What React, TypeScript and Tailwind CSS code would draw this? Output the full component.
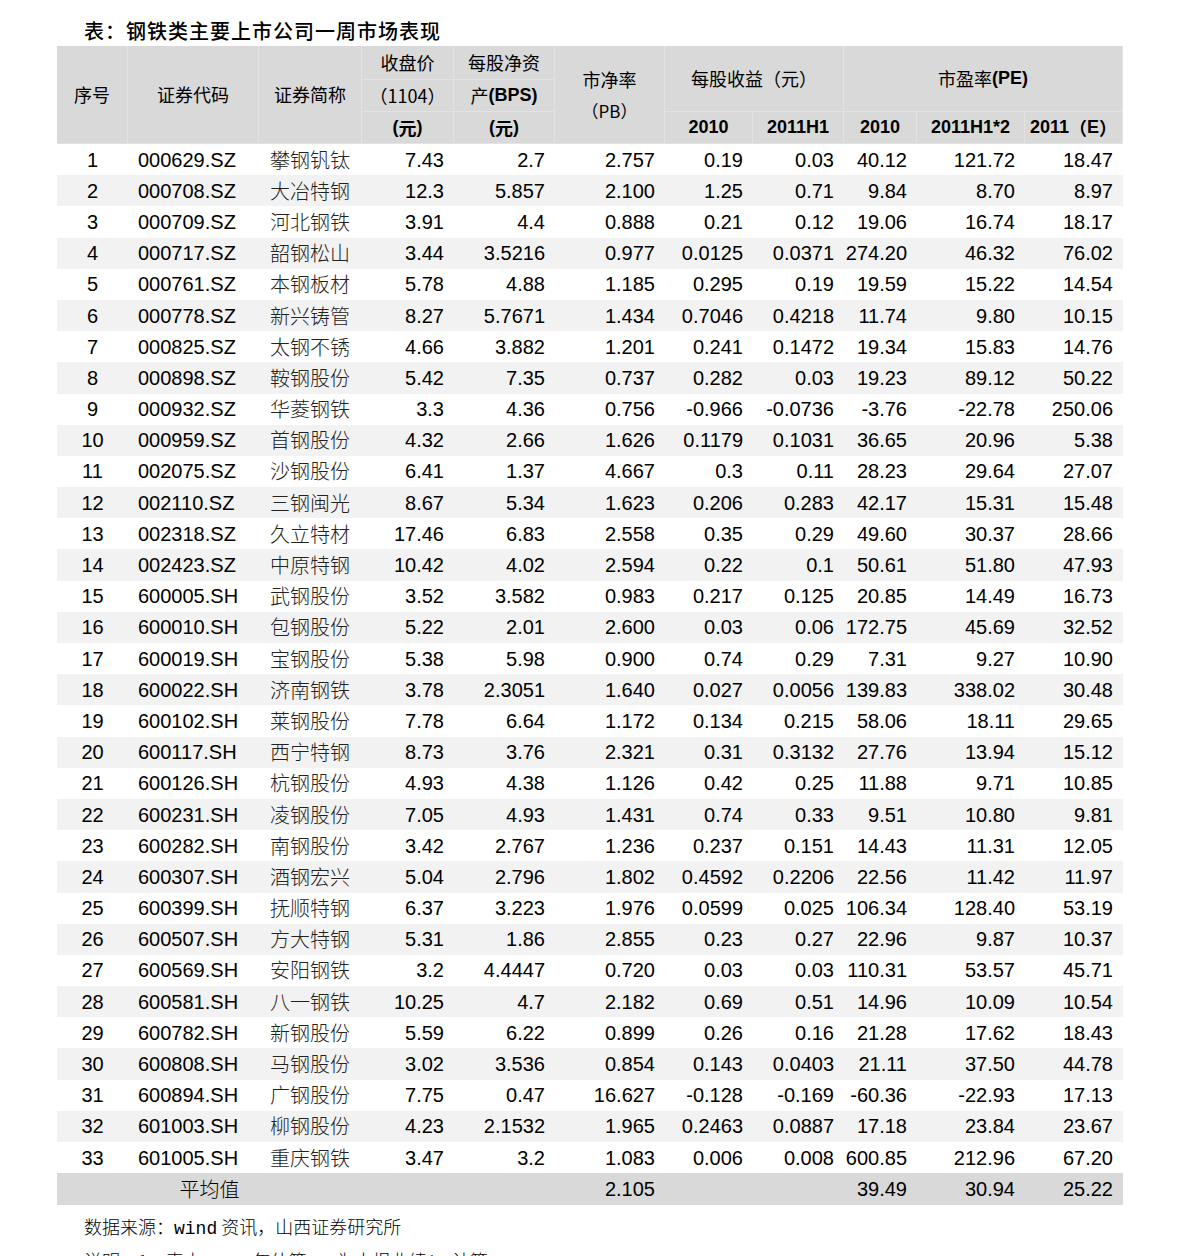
import React from "react";

const rows: string[][] = [
  ["1", "000629.SZ", "攀钢钒钛", "7.43", "2.7", "2.757", "0.19", "0.03", "40.12", "121.72", "18.47"],
  ["2", "000708.SZ", "大冶特钢", "12.3", "5.857", "2.100", "1.25", "0.71", "9.84", "8.70", "8.97"],
  ["3", "000709.SZ", "河北钢铁", "3.91", "4.4", "0.888", "0.21", "0.12", "19.06", "16.74", "18.17"],
  ["4", "000717.SZ", "韶钢松山", "3.44", "3.5216", "0.977", "0.0125", "0.0371", "274.20", "46.32", "76.02"],
  ["5", "000761.SZ", "本钢板材", "5.78", "4.88", "1.185", "0.295", "0.19", "19.59", "15.22", "14.54"],
  ["6", "000778.SZ", "新兴铸管", "8.27", "5.7671", "1.434", "0.7046", "0.4218", "11.74", "9.80", "10.15"],
  ["7", "000825.SZ", "太钢不锈", "4.66", "3.882", "1.201", "0.241", "0.1472", "19.34", "15.83", "14.76"],
  ["8", "000898.SZ", "鞍钢股份", "5.42", "7.35", "0.737", "0.282", "0.03", "19.23", "89.12", "50.22"],
  ["9", "000932.SZ", "华菱钢铁", "3.3", "4.36", "0.756", "-0.966", "-0.0736", "-3.76", "-22.78", "250.06"],
  ["10", "000959.SZ", "首钢股份", "4.32", "2.66", "1.626", "0.1179", "0.1031", "36.65", "20.96", "5.38"],
  ["11", "002075.SZ", "沙钢股份", "6.41", "1.37", "4.667", "0.3", "0.11", "28.23", "29.64", "27.07"],
  ["12", "002110.SZ", "三钢闽光", "8.67", "5.34", "1.623", "0.206", "0.283", "42.17", "15.31", "15.48"],
  ["13", "002318.SZ", "久立特材", "17.46", "6.83", "2.558", "0.35", "0.29", "49.60", "30.37", "28.66"],
  ["14", "002423.SZ", "中原特钢", "10.42", "4.02", "2.594", "0.22", "0.1", "50.61", "51.80", "47.93"],
  ["15", "600005.SH", "武钢股份", "3.52", "3.582", "0.983", "0.217", "0.125", "20.85", "14.49", "16.73"],
  ["16", "600010.SH", "包钢股份", "5.22", "2.01", "2.600", "0.03", "0.06", "172.75", "45.69", "32.52"],
  ["17", "600019.SH", "宝钢股份", "5.38", "5.98", "0.900", "0.74", "0.29", "7.31", "9.27", "10.90"],
  ["18", "600022.SH", "济南钢铁", "3.78", "2.3051", "1.640", "0.027", "0.0056", "139.83", "338.02", "30.48"],
  ["19", "600102.SH", "莱钢股份", "7.78", "6.64", "1.172", "0.134", "0.215", "58.06", "18.11", "29.65"],
  ["20", "600117.SH", "西宁特钢", "8.73", "3.76", "2.321", "0.31", "0.3132", "27.76", "13.94", "15.12"],
  ["21", "600126.SH", "杭钢股份", "4.93", "4.38", "1.126", "0.42", "0.25", "11.88", "9.71", "10.85"],
  ["22", "600231.SH", "凌钢股份", "7.05", "4.93", "1.431", "0.74", "0.33", "9.51", "10.80", "9.81"],
  ["23", "600282.SH", "南钢股份", "3.42", "2.767", "1.236", "0.237", "0.151", "14.43", "11.31", "12.05"],
  ["24", "600307.SH", "酒钢宏兴", "5.04", "2.796", "1.802", "0.4592", "0.2206", "22.56", "11.42", "11.97"],
  ["25", "600399.SH", "抚顺特钢", "6.37", "3.223", "1.976", "0.0599", "0.025", "106.34", "128.40", "53.19"],
  ["26", "600507.SH", "方大特钢", "5.31", "1.86", "2.855", "0.23", "0.27", "22.96", "9.87", "10.37"],
  ["27", "600569.SH", "安阳钢铁", "3.2", "4.4447", "0.720", "0.03", "0.03", "110.31", "53.57", "45.71"],
  ["28", "600581.SH", "八一钢铁", "10.25", "4.7", "2.182", "0.69", "0.51", "14.96", "10.09", "10.54"],
  ["29", "600782.SH", "新钢股份", "5.59", "6.22", "0.899", "0.26", "0.16", "21.28", "17.62", "18.43"],
  ["30", "600808.SH", "马钢股份", "3.02", "3.536", "0.854", "0.143", "0.0403", "21.11", "37.50", "44.78"],
  ["31", "600894.SH", "广钢股份", "7.75", "0.47", "16.627", "-0.128", "-0.169", "-60.36", "-22.93", "17.13"],
  ["32", "601003.SH", "柳钢股份", "4.23", "2.1532", "1.965", "0.2463", "0.0887", "17.18", "23.84", "23.67"],
  ["33", "601005.SH", "重庆钢铁", "3.47", "3.2", "1.083", "0.006", "0.008", "600.85", "212.96", "67.20"],
];

const COLS = "grid-cols-[71px_131px_103px_92px_101px_110px_88px_91px_73px_108px_98px]";
const num = "font-['Liberation_Sans',Arial,sans-serif]";
const cjk = "font-['Noto_Sans_CJK_SC',sans-serif]";
const hcell = "flex items-center justify-center border-r border-b border-[#e3e3e3]";

export default function App() {
  return (
    <div className="w-[1191px] bg-white text-black">
      <div className="pl-[57px] pt-[16px]">
        <div className={`h-[30px] pl-[27px] text-[20px] leading-[30px] font-medium tracking-[1px] ${cjk}`}>
          表：钢铁类主要上市公司一周市场表现
        </div>
        <div className="w-[1066px]">
          {/* header */}
          <div className={`grid ${COLS} grid-rows-[34px_32px_32px] bg-[#d9d9d9] text-[18px] ${cjk}`}>
            <div className={`${hcell} col-start-1 row-start-1 row-span-3`}>序号</div>
            <div className={`${hcell} col-start-2 row-start-1 row-span-3`}>证券代码</div>
            <div className={`${hcell} col-start-3 row-start-1 row-span-3`}>证券简称</div>
            <div className={`${hcell} col-start-4 row-start-1`}>收盘价</div>
            <div className={`${hcell} col-start-4 row-start-2`}>（1104）</div>
            <div className={`${hcell} col-start-4 row-start-3 font-bold`}>
              <span className={num}>(</span>元<span className={num}>)</span>
            </div>
            <div className={`${hcell} col-start-5 row-start-1`}>每股净资</div>
            <div className={`${hcell} col-start-5 row-start-2`}>
              产<span className={`${num} font-bold`}>(BPS)</span>
            </div>
            <div className={`${hcell} col-start-5 row-start-3 font-bold`}>
              <span className={num}>(</span>元<span className={num}>)</span>
            </div>
            <div className={`${hcell} col-start-6 row-start-1 row-span-3 flex-col leading-[32px]`}>
              <div>市净率</div>
              <div className="text-[17px]">（PB）</div>
            </div>
            <div className={`${hcell} col-start-7 col-span-2 row-start-1 row-span-2`}>每股收益（元）</div>
            <div className={`${hcell} col-start-9 col-span-3 row-start-1 row-span-2`}>
              市盈率<span className={`${num} font-bold`}>(PE)</span>
            </div>
            <div className={`${hcell} col-start-7 row-start-3 font-bold ${num}`}>2010</div>
            <div className={`${hcell} col-start-8 row-start-3 font-bold ${num}`}>2011H1</div>
            <div className={`${hcell} col-start-9 row-start-3 font-bold ${num}`}>2010</div>
            <div className={`${hcell} col-start-10 row-start-3 font-bold ${num}`}>2011H1*2</div>
            <div className={`${hcell} col-start-11 row-start-3 font-bold`}>
              <span className={num}>2011</span>（<span className={num}>E</span>）
            </div>
          </div>
          {/* body */}
          {rows.map((r, i) => (
            <div
              key={r[0]}
              className={`grid ${COLS} h-[31.2px] items-center text-[20px] leading-none ${
                i % 2 === 1 ? "bg-[#f2f2f2]" : "bg-white"
              }`}
            >
              <div className={`text-center ${num}`}>{r[0]}</div>
              <div className={`pl-[10px] ${num}`}>{r[1]}</div>
              <div className={`pl-[11px] font-light text-[#222] ${cjk}`}>{r[2]}</div>
              {r.slice(3).map((v, j) => (
                <div key={j} className={`pr-[10px] text-right ${num}`}>
                  {v}
                </div>
              ))}
            </div>
          ))}
          {/* average */}
          <div className={`grid ${COLS} h-[32px] items-center bg-[#d9d9d9] text-[20px] leading-none`}>
            <div className={`col-span-3 text-center font-light ${cjk}`}>平均值</div>
            <div />
            <div />
            <div className={`pr-[10px] text-right ${num}`}>2.105</div>
            <div />
            <div />
            <div className={`pr-[10px] text-right ${num}`}>39.49</div>
            <div className={`pr-[10px] text-right ${num}`}>30.94</div>
            <div className={`pr-[10px] text-right ${num}`}>25.22</div>
          </div>
        </div>
        <div className={`pl-[27px] pt-[6px] text-[18px] leading-[31px] font-light ${cjk}`}>
          <div>
            数据来源：<span className="font-['Liberation_Mono',monospace] font-normal">wind</span> 资讯，山西证券研究所
          </div>
          <div>
            说明：1、表中 <span className="font-['Liberation_Mono',monospace] font-normal">2011</span> 年估算{" "}
            <span className="font-['Liberation_Mono',monospace] font-normal">PE</span> 为中报业绩
            <span className="font-['Liberation_Mono',monospace] font-normal">*2</span> 计算
          </div>
          <div className="h-[60px]" />
        </div>
      </div>
    </div>
  );
}
